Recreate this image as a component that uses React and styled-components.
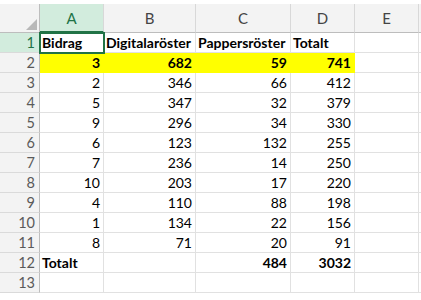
import React from 'react';
import styled, { createGlobalStyle } from 'styled-components';

const GlobalStyle = createGlobalStyle`
  html, body {
    margin: 0;
    padding: 0;
    background: #ffffff;
  }
  body {
    font-family: 'Lato', 'Liberation Sans', sans-serif;
  }
`;

const COLS = ['A', 'B', 'C', 'D', 'E'];

const rows = [
  ['Bidrag', 'Digitalaröster', 'Pappersröster', 'Totalt'],
  [3, 682, 59, 741],
  [2, 346, 66, 412],
  [5, 347, 32, 379],
  [9, 296, 34, 330],
  [6, 123, 132, 255],
  [7, 236, 14, 250],
  [10, 203, 17, 220],
  [4, 110, 88, 198],
  [1, 134, 22, 156],
  [8, 71, 20, 91],
  ['Totalt', '', 484, 3032],
  ['', '', '', ''],
];

const Page = styled.div`
  width: 421px;
  height: 300px;
  overflow: hidden;
  padding-top: 4px;
  box-sizing: border-box;
`;

const Sheet = styled.div`
  position: relative;
  display: grid;
  grid-template-columns: 40px 64px 92px 95px 64px 64px 1fr;
  grid-auto-rows: 20px;
  grid-template-rows: 29px;
`;

const Corner = styled.div`
  position: relative;
  background: #f3f3f3;
  border-right: 1px solid #bdbdbd;
  border-bottom: 1px solid #bdbdbd;

  &::after {
    content: '';
    position: absolute;
    right: 2px;
    bottom: 2px;
    width: 0;
    height: 0;
    border-style: solid;
    border-width: 0 0 11px 11px;
    border-color: transparent transparent #b8b8b8 transparent;
  }
`;

const ColHead = styled.div`
  display: flex;
  align-items: center;
  justify-content: center;
  font-size: 15px;
  color: ${(p) => (p.selected ? '#217346' : '#444444')};
  background: ${(p) => (p.selected ? '#d2ecdd' : '#f3f3f3')};
  border-right: 1px solid #d8d8d8;
  border-bottom: ${(p) => (p.selected ? '2px solid #217346' : '1px solid #bdbdbd')};
  box-sizing: border-box;
`;

const RowHead = styled.div`
  display: flex;
  align-items: center;
  justify-content: flex-end;
  padding-right: 4px;
  font-size: 14.5px;
  color: ${(p) => (p.selected ? '#217346' : '#5a5a5a')};
  background: ${(p) => (p.selected ? '#d2ecdd' : '#f3f3f3')};
  border-right: 1px solid #bdbdbd;
  border-bottom: 1px solid #dadada;
  box-sizing: border-box;
`;

const Cell = styled.div`
  display: flex;
  align-items: center;
  justify-content: ${(p) => (p.num ? 'flex-end' : 'flex-start')};
  padding: 0 3px 0 2px;
  font-size: 14px;
  font-weight: ${(p) => (p.bold ? 700 : 400)};
  color: #000000;
  background: ${(p) => (p.hl ? '#ffff00' : '#ffffff')};
  border-right: 1px solid ${(p) => (p.hl ? '#ffff00' : '#e1e1e1')};
  border-bottom: 1px solid ${(p) => (p.hl ? '#ffff00' : '#e1e1e1')};
  box-sizing: border-box;
  white-space: nowrap;
  overflow: visible;
`;

const Selection = styled.div`
  position: absolute;
  left: 39px;
  top: 28px;
  width: 66px;
  height: 22px;
  border: 2px solid #217346;
  box-sizing: border-box;
  pointer-events: none;
`;

export default function App() {
  return (
    <>
      <GlobalStyle />
      <Page>
        <Sheet>
          <Corner />
          {COLS.map((c) => (
            <ColHead key={c} selected={c === 'A'}>
              {c}
            </ColHead>
          ))}
          <ColHead />
          {rows.map((r, i) => {
            const n = i + 1;
            const bold = n === 1 || n === 2 || n === 12;
            const hl = n === 2;
            return (
              <React.Fragment key={n}>
                <RowHead selected={n === 1}>{n}</RowHead>
                {r.map((v, j) => (
                  <Cell key={j} num={typeof v === 'number'} bold={bold} hl={hl}>
                    {v}
                  </Cell>
                ))}
                <Cell />
                <Cell />
              </React.Fragment>
            );
          })}
          <Selection />
        </Sheet>
      </Page>
    </>
  );
}
